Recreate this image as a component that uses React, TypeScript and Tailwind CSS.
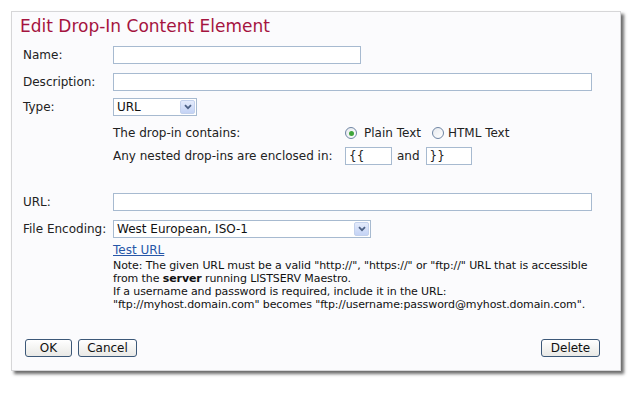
import React from "react";

const font = { fontFamily: '"DejaVu Sans", Verdana, sans-serif' };

function TextInput({ w, value }: { w: string; value?: string }) {
  return (
    <div
      className={`${w} h-[18px] border border-[#a7bad0] bg-white flex items-center px-[3px] text-[12px] text-[#222]`}
    >
      {value}
    </div>
  );
}

function Select({ w, value }: { w: string; value: string }) {
  return (
    <div
      className={`${w} h-[18px] border border-[#a7bad0] bg-white flex items-center justify-between pl-[3px] pr-[1px] text-[12px] text-[#111]`}
    >
      <span>{value}</span>
      <div className="w-[15px] h-[14px] rounded-[2px] border border-[#c3d1ec] bg-gradient-to-b from-[#e4ebfb] to-[#c4d3f5] flex items-center justify-center">
        <svg width="8" height="6" viewBox="0 0 8 6">
          <path d="M1 1.2 L4 4.2 L7 1.2" stroke="#4d6185" strokeWidth="1.8" fill="none" />
        </svg>
      </div>
    </div>
  );
}

function Radio({ checked }: { checked?: boolean }) {
  return (
    <div className="w-[12px] h-[12px] rounded-full border border-[#6f85a4] bg-gradient-to-br from-[#e6e9ee] to-white flex items-center justify-center">
      {checked && <div className="w-[5px] h-[5px] rounded-full bg-[#3fa53a]" />}
    </div>
  );
}

function Button({ children, w }: { children: React.ReactNode; w: string }) {
  return (
    <div
      className={`${w} h-[18px] rounded-[3px] border border-[#3c5878] bg-gradient-to-b from-white to-[#e9e9e6] flex items-center justify-center text-[12px] text-[#111]`}
    >
      {children}
    </div>
  );
}

export default function App() {
  return (
    <div className="w-[638px] h-[400px] bg-white relative" style={font}>
      <div className="absolute left-[11px] top-[11px] w-[610px] h-[360px] border border-[#d6d6d8] bg-[#fbfbfd] shadow-[3px_3px_3px_rgba(60,60,60,0.75)] flex flex-col">
        <div className="h-[29px] flex items-center pl-[8px] text-[17px] text-[#a5143f]">
          Edit Drop-In Content Element
        </div>
        <div className="flex flex-col pl-[11px] text-[12px] text-[#222]">
          <div className="mt-[4px] h-[19px] flex items-center">
            <div className="w-[90px]">Name:</div>
            <TextInput w="w-[248px]" />
          </div>
          <div className="mt-[8px] h-[19px] flex items-center">
            <div className="w-[90px]">Description:</div>
            <TextInput w="w-[479px]" />
          </div>
          <div className="mt-[6px] h-[19px] flex items-center">
            <div className="w-[90px]">Type:</div>
            <Select w="w-[84px]" value="URL" />
          </div>
          <div className="mt-[8px] h-[18px] flex items-center">
            <div className="w-[90px]" />
            <div className="w-[232px]">The drop-in contains:</div>
            <div className="flex items-center">
              <Radio checked />
              <span className="ml-[7px]">Plain Text</span>
              <div className="ml-[11px]">
                <Radio />
              </div>
              <span className="ml-[4px]">HTML Text</span>
            </div>
          </div>
          <div className="mt-[4px] h-[19px] flex items-center">
            <div className="w-[90px]" />
            <div className="w-[232px] whitespace-nowrap">Any nested drop-ins are enclosed in:</div>
            <TextInput w="w-[47px]" value="{{" />
            <span className="ml-[5px] mr-[6px]">and</span>
            <TextInput w="w-[46px]" value="}}" />
          </div>
          <div className="mt-[28px] h-[18px] flex items-center">
            <div className="w-[90px]">URL:</div>
            <TextInput w="w-[479px]" />
          </div>
          <div className="mt-[9px] h-[18px] flex items-center">
            <div className="w-[90px]">File Encoding:</div>
            <Select w="w-[258px]" value="West European, ISO-1" />
          </div>
          <div className="mt-[5px] h-[14px] flex items-center">
            <div className="w-[90px]" />
            <span className="text-[#2757a8] underline">Test URL</span>
          </div>
          <div className="mt-[2px] flex">
            <div className="w-[90px] shrink-0" />
            <div className="text-[11px] leading-[13px] text-[#111] tracking-[-0.1px] whitespace-nowrap">
              <div>
                Note: The given URL must be a valid "http://", "https://" or "ftp://" URL that is accessible
              </div>
              <div>
                from the <b>server</b> running LISTSERV Maestro.
              </div>
              <div>If a username and password is required, include it in the URL:</div>
              <div>"ftp://myhost.domain.com" becomes "ftp://username:password@myhost.domain.com".</div>
            </div>
          </div>
          <div className="mt-[28px] h-[18px] flex items-center pl-[2px] pr-[20px]">
            <div className="flex gap-[6px]">
              <Button w="w-[47px]">OK</Button>
              <Button w="w-[59px]">Cancel</Button>
            </div>
            <div className="flex-1" />
            <Button w="w-[59px]">Delete</Button>
          </div>
        </div>
      </div>
    </div>
  );
}
